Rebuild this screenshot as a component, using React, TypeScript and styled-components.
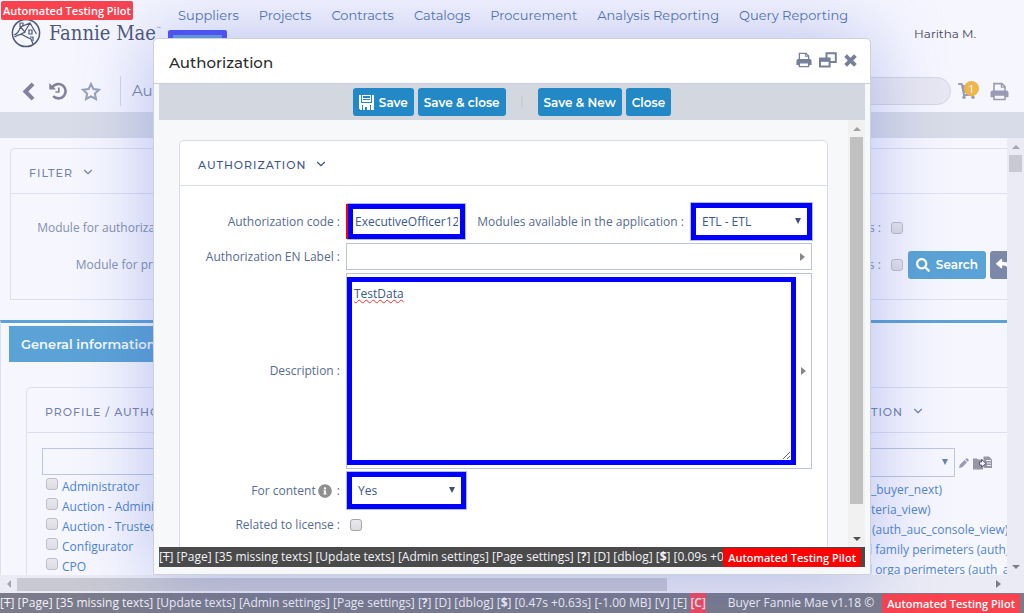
import React from 'react';
import styled, { createGlobalStyle, css } from 'styled-components';
import { FaShoppingCart, FaSearch, FaReply, FaInfoCircle } from 'react-icons/fa';
import { ChevronDown } from 'lucide-react';

const display = "Montserrat, Inter, 'Open Sans', sans-serif";
const body = "'Open Sans', 'Noto Sans', sans-serif";

const GlobalStyle = createGlobalStyle`
  *, *::before, *::after { box-sizing: border-box; }
  body { margin: 0; background: #f6f6ff; font-family: ${body}; font-size: 12px; line-height: 20px; color: #3d5a8a; overflow: hidden; }
  button, input, select, textarea { font: inherit; color: inherit; margin: 0; }
  a { text-decoration: none; color: inherit; }
  svg { display: block; flex: none; }
`;

const Page = styled.div`
  position: relative;
  height: 100vh;
  display: flex;
  flex-direction: column;
  overflow: hidden;
`;

const Header = styled.header`
  display: flex;
  align-items: flex-start;
  height: 70px;
  flex: none;
`;

const Brand = styled.a`
  display: flex;
  align-items: center;
  gap: 8px;
  width: 178px;
  padding: 18px 0 0 11px;
  font-family: 'Roboto Slab', 'DejaVu Serif Condensed', 'DejaVu Serif', 'Liberation Serif', serif;
  font-size: 20px;
  line-height: 30px;
  color: #4d5878;
  white-space: nowrap;
  sup { font-size: 6px; line-height: 6px; vertical-align: 9px; }
`;

const MainNav = styled.nav`
  display: flex;
  gap: 20px;
  flex: 1;
  padding-top: 5px;
`;

const NavLink = styled.a<{ $active?: boolean }>`
  position: relative;
  font-family: ${display};
  font-size: 13px;
  color: #5273b3;
  white-space: nowrap;
  ${(p) => p.$active && css`
    &::after {
      content: '';
      position: absolute;
      left: -10px;
      right: 12px;
      top: 25px;
      height: 14px;
      background: #6aa0d8;
      border: 5px solid #5252fa;
      border-radius: 2px;
    }
  `}
`;

const UserName = styled.span`
  padding: 24px 48px 0 0;
  font-family: ${display};
  font-size: 12px;
  color: #45455a;
`;

const TitleBar = styled.div`
  display: flex;
  align-items: center;
  justify-content: space-between;
  height: 42px;
  flex: none;
  padding: 0 15px 0 22px;
`;

const BarGroup = styled.div<{ $gap: number }>`
  display: flex;
  align-items: center;
  gap: ${(p) => p.$gap}px;
  color: #9a9ab4;
`;

const PlainButton = styled.button<{ $color?: string }>`
  display: flex;
  position: relative;
  padding: 0;
  border: 0;
  background: none;
  color: ${(p) => p.$color ?? '#9a9ab4'};
`;

const PageTitle = styled.h1`
  margin: 0 0 0 5px;
  padding-left: 11px;
  border-left: 1px solid #d4d7e6;
  font: 400 15px/30px ${display};
  color: #7b86a4;
`;

const SearchInput = styled.input`
  width: 180px;
  height: 28px;
  border: 1px solid #d5d5e4;
  border-radius: 14px;
  background: #e8e7f2;
`;

const Count = styled.span`
  position: absolute;
  right: -3px;
  top: -1px;
  width: 15px;
  height: 15px;
  border-radius: 50%;
  background: #efb54a;
  color: #fff;
  font-size: 11px;
  line-height: 15px;
  text-align: center;
`;

const Band = styled.div`
  height: 26px;
  flex: none;
  background: #d8dce8;
`;

const Viewport = styled.div`
  display: flex;
  flex: 1;
  min-height: 0;
`;

const Content = styled.main`
  flex: 1;
  min-width: 0;
  overflow: hidden;
`;

const BackPanel = styled.section<{ $nested?: boolean }>`
  margin: ${(p) => (p.$nested ? '25px 0 0 25px' : '10px 0 0 10px')};
  border: 1px solid #dcdff2;
  border-right: 0;
  border-radius: 5px 0 0 0;
`;

const BackPanelHead = styled.header`
  display: flex;
  align-items: center;
  justify-content: space-between;
  height: 45px;
  padding: 4px 82px 0 18px;
  border-bottom: 1px solid #dcdff2;
`;

const PanelTitle = styled.h2<{ $strong?: boolean }>`
  display: flex;
  align-items: center;
  gap: 8px;
  margin: 0;
  font: 500 11px/20px ${display};
  letter-spacing: 1px;
  color: ${(p) => (p.$strong ? '#3d5588' : '#7482ab')};
  white-space: nowrap;
  svg { margin-top: -2px; }
`;

const FilterRow = styled.div`
  display: flex;
  align-items: center;
  height: 37px;
  color: #8290b0;
`;

const FilterLabel = styled.label`
  width: 178px;
  text-align: right;
  white-space: nowrap;
`;

const FilterBody = styled.div`
  padding: 15px 0 16px;
`;

const Check = styled.input.attrs({ type: 'checkbox' })<{ $faded?: boolean }>`
  appearance: none;
  flex: none;
  width: 12px;
  height: 12px;
  border: 1px solid ${(p) => (p.$faded ? '#bcbccb' : '#a4a4a4')};
  border-radius: 3px;
  background: linear-gradient(#e8e8ee, #dcdce2);
`;

const FilterEnd = styled.div`
  display: flex;
  align-items: center;
  flex: 1;
  justify-content: flex-end;
  gap: 4px;
`;

const EndCheck = styled.label<{ $space: number }>`
  display: flex;
  align-items: center;
  gap: 10px;
  margin-right: ${(p) => p.$space}px;
`;

const ActionButton = styled.button<{ $kind: 'dialog' | 'page' | 'clipped' }>`
  display: flex;
  align-items: center;
  gap: ${(p) => (p.$kind === 'page' ? 6 : 5)}px;
  height: 28px;
  width: ${(p) => (p.$kind === 'clipped' ? '17px' : 'auto')};
  overflow: hidden;
  padding: 1px ${(p) => (p.$kind === 'page' ? 8 : 6)}px 0;
  border: 0;
  border-radius: ${(p) => (p.$kind === 'clipped' ? '3px 0 0 3px' : '3px')};
  background: ${(p) => ({ dialog: '#2388c6', page: '#5ba3d6', clipped: '#7d87a8' })[p.$kind]};
  color: #fff;
  font: 600 12px/20px ${display};
  white-space: nowrap;
`;

const Tabs = styled.div`
  margin-top: 20px;
  border-top: 3px solid #5ba3d6;
  border-left: 1px solid #dcdff2;
  padding-top: 3px;
`;

const Tab = styled.button`
  display: block;
  width: 166px;
  height: 36px;
  margin-left: 8px;
  padding: 0 12px;
  border: 0;
  background: #5ba3d6;
  color: #f4f8ff;
  text-align: left;
  font: 600 13px/20px ${display};
  white-space: nowrap;
`;

const Columns = styled.div`
  display: flex;
  justify-content: space-between;
  padding: 15px 0 0 15px;
`;

const ProfileList = styled.div`
  flex: 1;
`;

const ProfileInput = styled.input`
  display: block;
  width: 200px;
  height: 27px;
  margin-bottom: 2px;
  border: 1px solid #bcc6e0;
  background: transparent;
`;

const ProfileItem = styled.label`
  display: flex;
  gap: 4px;
  height: 20px;
  padding-left: 4px;
  color: #4a84d4;
  white-space: nowrap;
  input { margin-top: 1px; }
`;

const AuthList = styled.div`
  width: 143px;
  overflow: hidden;
  white-space: nowrap;
`;

const AuthTools = styled.div`
  display: flex;
  align-items: center;
  gap: 4px;
  margin-bottom: 3px;
`;

const AuthSelect = styled.select`
  display: block;
  appearance: none;
  width: 91px;
  height: 29px;
  border: 1px solid #bcc6e0;
  background: transparent;
`;

const SelectWrap = styled.span<{ $right: number; $color: string }>`
  position: relative;
  display: block;
  &::after {
    content: '';
    position: absolute;
    right: ${(p) => p.$right}px;
    top: 50%;
    margin-top: -4px;
    border: 3px solid transparent;
    border-top: 6px solid ${(p) => p.$color};
    border-bottom: 0;
    pointer-events: none;
  }
`;

const AuthLink = styled.a<{ $indent: number }>`
  display: block;
  height: 20px;
  padding-left: ${(p) => p.$indent}px;
  color: #5286cc;
`;

const Scroll = styled.div<{ $dir: 'v' | 'h'; $bg: string }>`
  display: flex;
  flex: none;
  flex-direction: ${(p) => (p.$dir === 'v' ? 'column' : 'row')};
  align-items: center;
  background: ${(p) => p.$bg};
  ${(p) => (p.$dir === 'v' ? 'width: 17px;' : 'height: 18px; padding-right: 17px;')}
`;

const Arrow = styled.span<{ $to: 'up' | 'down' | 'left' | 'right'; $color: string; $narrow?: boolean }>`
  display: flex;
  align-items: center;
  justify-content: center;
  flex: none;
  width: ${(p) => (p.$narrow ? 15 : 17)}px;
  height: 17px;
  &::before {
    content: '';
    border: 4px solid transparent;
    ${(p) => p.$to === 'up' && `border-top: 0; border-bottom-color: ${p.$color};`}
    ${(p) => p.$to === 'down' && `border-bottom: 0; border-top-color: ${p.$color};`}
    ${(p) => p.$to === 'left' && `border-left: 0; border-right-color: ${p.$color};`}
    ${(p) => p.$to === 'right' && `border-right: 0; border-left: 5px solid ${p.$color};`}
  }
`;

const Track = styled.span`
  display: block;
  flex: 1;
  align-self: stretch;
`;

const Thumb = styled.span<{ $dir: 'v' | 'h'; $size: string; $color: string }>`
  display: block;
  background: ${(p) => p.$color};
  ${(p) => (p.$dir === 'v'
    ? `width: 13px; height: ${p.$size}; margin: 0 2px;`
    : `height: 13px; width: ${p.$size}; margin: 2px 0;`)}
`;

const DebugBar = styled.footer<{ $bg: string }>`
  display: flex;
  align-items: center;
  flex: none;
  height: 20px;
  overflow: hidden;
  background: ${(p) => p.$bg};
  color: #f2f2f8;
  font-weight: 500;
  white-space: nowrap;
`;

const DebugText = styled.span`
  flex: 1;
  min-width: 0;
  overflow: hidden;
  mark { background: #ee4a5c; color: #f4e4f0; font-weight: 600; padding: 2px 0; }
`;

const Version = styled.span`
  flex: none;
  padding-right: 8px;
`;

const PilotTag = styled.strong<{ $color: string; $corner?: boolean }>`
  flex: none;
  height: 19px;
  padding: 0 5px;
  border-radius: 2px;
  background: ${(p) => p.$color};
  color: #fff;
  font-size: 11px;
  line-height: 19px;
  font-weight: 600;
  white-space: nowrap;
  ${(p) => p.$corner && css`
    position: absolute;
    left: 1px;
    top: 1px;
    padding: 0 2px;
  `}
`;

const TagSlot = styled.span`
  display: flex;
  flex: none;
  padding-right: 4px;
`;

const Dialog = styled.div`
  position: absolute;
  inset: 38px 153px 38px 153px;
  display: flex;
  flex-direction: column;
  border: 1px solid #cfd0d8;
  border-radius: 5px 5px 0 0;
  background: #f7f8fa;
  box-shadow: 0 0 75px rgba(60, 90, 200, 0.36);
`;

const DialogHead = styled.header`
  display: flex;
  align-items: center;
  justify-content: space-between;
  flex: none;
  height: 45px;
  padding: 0 13px 0 15px;
  border-bottom: 1px solid #c9cde4;
  border-radius: 5px 5px 0 0;
  background: #fff;
  h2 { margin: 0; padding-top: 4px; font: 500 15px/20px ${display}; color: #2c2c2e; }
`;

const DialogInner = styled.div`
  display: flex;
  flex-direction: column;
  flex: 1;
  min-height: 0;
  padding: 0 5px 7px;
`;

const Toolbar = styled.div`
  display: flex;
  align-items: center;
  justify-content: center;
  gap: 4px;
  flex: none;
  height: 36px;
  background: #d3d8e0;
`;

const Divider = styled.span`
  width: 2px;
  height: 12px;
  margin: 0 11px;
  background: #cbcfd2;
`;

const FormArea = styled.div`
  display: flex;
  flex: 1;
  min-height: 0;
`;

const FormScroll = styled.div`
  flex: 1;
  min-width: 0;
  overflow: hidden;
  padding: 20px 20px 0;
`;

const Card = styled.section`
  min-height: 460px;
  border: 1px solid #d9dbea;
  border-radius: 5px;
  background: #fff;
`;

const CardHead = styled.header`
  height: 45px;
  padding: 14px 18px 0;
  border-bottom: 1px solid #d9dbea;
`;

const Form = styled.form`
  display: grid;
  grid-template-columns: 160px 1fr;
  column-gap: 6px;
  row-gap: 3px;
  align-items: center;
  padding: 17px 15px 0 0;
`;

const Label = styled.label<{ $inline?: boolean }>`
  display: flex;
  align-items: center;
  justify-content: flex-end;
  gap: 2px;
  padding-left: ${(p) => (p.$inline ? 4 : 0)}px;
  color: #566c92;
  white-space: nowrap;
`;

const Line = styled.div<{ $indent?: number }>`
  display: flex;
  align-items: center;
  justify-content: space-between;
  min-height: 26px;
  padding-left: ${(p) => p.$indent ?? 0}px;
`;

const CodeInput = styled.input`
  width: 117px;
  height: 35px;
  margin-right: 1px;
  padding: 0 2px;
  border: 5px solid #0000ff;
  border-radius: 0;
  box-shadow: -2px 0 0 #ff0000, 0 0 0 1px #b4bfd4;
  background: #fff;
  color: #3a5888;
  font-weight: 500;
  outline: 0;
`;

const BlueSelect = styled.select<{ $width: number }>`
  display: block;
  appearance: none;
  width: ${(p) => p.$width}px;
  height: 37px;
  padding: 0 6px;
  border: 5px solid #0000ff;
  box-shadow: 0 0 0 1px #b4bfd4;
  border-radius: 0;
  background: #fff;
  color: #3a5888;
  font-weight: 500;
  outline: 0;
`;

const ArrowField = styled.div`
  display: flex;
  align-items: center;
  border: 1px solid #bcc5d8;
`;

const LabelInput = styled.input`
  flex: 1;
  min-width: 0;
  height: 25px;
  border: 0;
  background: transparent;
  outline: 0;
`;

const Description = styled.textarea`
  display: block;
  flex: 1;
  min-width: 0;
  height: 188px;
  margin: 3px 0;
  padding: 2px;
  border: 5px solid #0000ff;
  border-radius: 0;
  background: #fff;
  color: #3a5888;
  font-weight: 500;
  outline: 0;
  resize: vertical;
  text-decoration: underline wavy #f03030 1px;
`;

const HeadIcons = styled.div`
  display: flex;
  align-items: center;
  gap: 7px;
  padding-bottom: 2px;
`;

const PrinterIcon = ({ size, paper }: { size: number; paper: string }) => (
  <svg width={size} height={size} viewBox="0 0 18 18" fill="none" stroke="currentColor" strokeWidth="1.5">
    <path d="M3.8 9V1.5h7.4L14.2 4.4V9" />
    <path d="M10.8 1.5V4.8H14.2" strokeWidth="1.2" />
    <path d="M0.5 10Q0.5 8 2.5 8h13Q17.5 8 17.5 10V14.5H0.5Z" fill="currentColor" stroke="none" />
    <path d="M3.8 12.2h10.4v4.3H3.8Z" fill={paper} />
  </svg>
);

const BackIcon = () => (
  <svg width="13" height="19" viewBox="0 0 13 19" fill="none" stroke="currentColor" strokeWidth="4">
    <path d="M11 1.8L3.4 9.5L11 17.2" />
  </svg>
);

const HistoryIcon = () => (
  <svg width="18" height="18" viewBox="0 0 18 18" fill="none" stroke="currentColor" strokeWidth="2.6">
    <path d="M3.4 5.2A7.2 7.2 0 1 1 4.2 14.2" />
    <path d="M0.3 1V7.6H7Z" fill="currentColor" stroke="none" />
    <path d="M9.8 5.4V10H6.4" strokeWidth="1.7" />
  </svg>
);

const StarIcon = () => (
  <svg width="20" height="19" viewBox="0 0 20 19" fill="none" stroke="currentColor" strokeWidth="2">
    <path d="M10 2L12.4 7L18 7.7L13.9 11.5L15 17L10 14.3L5 17L6.1 11.5L2 7.7L7.6 7Z" />
  </svg>
);

const CloseIcon = () => (
  <svg width="13" height="13" viewBox="0 0 13 13" stroke="currentColor" strokeWidth="3.8">
    <path d="M1.6 1.6L11.4 11.4M11.4 1.6L1.6 11.4" />
  </svg>
);

const PencilIcon = () => (
  <svg width="10" height="10" viewBox="0 0 10 10" fill="currentColor">
    <path d="M0 10L0.8 6.8L5.6 2L8 4.4L3.2 9.2ZM6.2 1.4L7.2 0.4Q7.8 0 8.4 0.5L9.5 1.6Q10 2.2 9.6 2.8L8.6 3.8Z" />
  </svg>
);

const WindowsIcon = () => (
  <svg width="18" height="16" viewBox="0 0 18 16" fill="none" stroke="currentColor" strokeWidth="2">
    <path d="M7.5 6V1.2H16.8V10H11" />
    <path d="M1 6.5h9.6v8H1Z" fill="#fff" />
    <path d="M1 6.5h9.6v2.8H1Z" fill="currentColor" strokeWidth="1" />
  </svg>
);

const FloppyIcon = () => (
  <svg width="15" height="15" viewBox="0 0 15 15" fill="#fff" shapeRendering="crispEdges">
    <path d="M0 0h2v8h11V0h2v15h-3v-5H3v5H1l-1-1Z" />
    <path d="M3 0h9v1H3ZM3 3h9v1H3ZM3 5h9v2H3ZM3 1h1v5H3ZM11 1h1v5h-1Z" />
    <path d="M4 10h7v5H8v-3H6v3H4Z" />
  </svg>
);

const HouseLogo = () => (
  <svg width="30" height="30" viewBox="0 0 30 30" fill="none" stroke="currentColor" strokeWidth="1.5">
    <circle cx="15" cy="15" r="13.6" />
    <path d="M3 17Q7 16 9.500 9L19 5L25.500 16M9 9V5h3v3M19 5L13 15M3.500 19Q9 15 12 17T20 21L22 26M9.500 9L14 14L8 17" strokeWidth="1.2" />
    <path d="M18 12h3v4h-3ZM19 19h3v4" strokeWidth="1.2" />
  </svg>
);

const TransferIcon = () => (
  <svg width="20" height="14" viewBox="0 0 20 14" fill="#9696a6">
    <path d="M0 2.500h4l1 1h5V13.500H0Z" />
    <path d="M10.500 0.500h5.500l3 3v8.500h-8.500Z" />
    <path d="M13 4.500h5M14 7h4M14 9.500h4" stroke="#f0f0fa" />
    <path d="M6.500 6H8.500V3.500L13 7.500L8.500 11V9H6.500Z" fill="#f4f4ff" stroke="#5c5c70" />
  </svg>
);

const navItems = ['Suppliers', 'Projects', 'Contracts', 'Catalogs', 'Procurement', 'Analysis Reporting', 'Query Reporting'];
const profiles = ['Administrator', 'Auction - Administrator', 'Auction - Trusted', 'Configurator', 'CPO'];
const rights: [string, number][] = [
  ['_buyer_next)', 7],
  ['teria_view)', 7],
  ['(auth_auc_console_view)', 8],
  ['l family perimeters (auth_', 5],
  ['l orga perimeters (auth_a', 5],
];

const DebugLinks = ({ timing }: { timing: React.ReactNode }) => (
  <DebugText>
    [<del>T</del>] [Page] [35 missing texts] [Update texts] [Admin settings] [Page settings] [<b>?</b>] [D] [dblog] [<b>$</b>] {timing}
  </DebugText>
);

export default function App() {
  return (
    <Page>
      <GlobalStyle />
      <Header>
        <Brand href="#"><HouseLogo /><span>Fannie Mae<sup>™</sup></span></Brand>
        <MainNav>
          {navItems.map((item, i) => <NavLink key={item} href="#" $active={i === 0}>{item}</NavLink>)}
        </MainNav>
        <UserName>Haritha M.</UserName>
      </Header>
      <TitleBar>
        <BarGroup $gap={14}>
          <PlainButton aria-label="Back" $color="#857f9e"><BackIcon /></PlainButton>
          <PlainButton aria-label="History" $color="#857f9e"><HistoryIcon /></PlainButton>
          <PlainButton aria-label="Favourite" $color="#96a0b8"><StarIcon /></PlainButton>
          <PageTitle>Authorizations</PageTitle>
        </BarGroup>
        <BarGroup $gap={7}>
          <SearchInput aria-label="Search the site" />
          <PlainButton aria-label="Cart"><FaShoppingCart size={18} /><Count>1</Count></PlainButton>
          <span />
          <PlainButton aria-label="Print page"><PrinterIcon size={19} paper="#f6f6ff" /></PlainButton>
        </BarGroup>
      </TitleBar>
      <Band />
      <Viewport>
        <Content>
          <BackPanel>
            <BackPanelHead><PanelTitle>FILTER <ChevronDown size={14} /></PanelTitle></BackPanelHead>
            <FilterBody>
              <FilterRow>
                <FilterLabel htmlFor="f1">Module for authorizations :</FilterLabel>
                <FilterEnd><EndCheck $space={104}>s : <Check id="f1" $faded /></EndCheck></FilterEnd>
              </FilterRow>
              <FilterRow>
                <FilterLabel htmlFor="f2">Module for profiles :</FilterLabel>
                <FilterEnd>
                  <EndCheck $space={1}>s : <Check id="f2" $faded /></EndCheck>
                  <ActionButton $kind="page"><FaSearch size={14} /> Search</ActionButton>
                  <ActionButton $kind="clipped" aria-label="Reset"><FaReply size={14} /></ActionButton>
                </FilterEnd>
              </FilterRow>
            </FilterBody>
          </BackPanel>
          <Tabs>
            <Tab>General information</Tab>
            <BackPanel $nested>
              <BackPanelHead>
                <PanelTitle>PROFILE / AUTHORIZATION</PanelTitle>
                <PanelTitle>AUTHORIZATION <ChevronDown size={14} /></PanelTitle>
              </BackPanelHead>
              <Columns>
                <ProfileList>
                  <ProfileInput aria-label="Profile" />
                  {profiles.map((p) => <ProfileItem key={p}><Check $faded /><span>{p}</span></ProfileItem>)}
                </ProfileList>
                <AuthList>
                  <AuthTools>
                    <SelectWrap $right={7} $color="#6c80b0"><AuthSelect aria-label="Right" /></SelectWrap>
                    <PlainButton aria-label="Edit"><PencilIcon /></PlainButton>
                    <PlainButton aria-label="Transfer"><TransferIcon /></PlainButton>
                  </AuthTools>
                  {rights.map(([text, indent]) => <AuthLink key={text} href="#" $indent={indent}>{text}</AuthLink>)}
                </AuthList>
              </Columns>
            </BackPanel>
          </Tabs>
        </Content>
        <Scroll $dir="v" $bg="#ebebf5">
          <Arrow $to="up" $color="#a5a5b2" />
          <Thumb $dir="v" $size="17px" $color="#c9c9d4" />
          <Track />
          <Arrow $to="down" $color="#7c7c8c" />
        </Scroll>
      </Viewport>
      <Scroll $dir="h" $bg="#ebebf5">
        <Arrow $to="left" $color="#a5a5b2" />
        <Thumb $dir="h" $size="64.5%" $color="#c9c9d4" />
        <Track />
        <Arrow $to="right" $color="#7c7c8c" />
      </Scroll>
      <DebugBar $bg="#7b7b8b">
        <DebugLinks timing={<>[0.47s +0.63s] [-1.00 MB] [V] [E] <mark>[C]</mark></>} />
        <Version>Buyer Fannie Mae v1.18 ©</Version>
        <TagSlot><PilotTag $color="#f8434f">Automated Testing Pilot</PilotTag></TagSlot>
      </DebugBar>
      <PilotTag $color="#f8434f" $corner>Automated Testing Pilot</PilotTag>

      <Dialog role="dialog" aria-labelledby="dialog-title">
        <DialogHead>
          <h2 id="dialog-title">Authorization</h2>
          <HeadIcons>
            <PlainButton aria-label="Print" $color="#77809a"><PrinterIcon size={16} paper="#fff" /></PlainButton>
            <PlainButton aria-label="Restore" $color="#77809a"><WindowsIcon /></PlainButton>
            <PlainButton aria-label="Close dialog" $color="#77809a"><CloseIcon /></PlainButton>
          </HeadIcons>
        </DialogHead>
        <DialogInner>
          <Toolbar>
            <ActionButton $kind="dialog"><FloppyIcon /> Save</ActionButton>
            <ActionButton $kind="dialog">Save &amp; close</ActionButton>
            <Divider />
            <ActionButton $kind="dialog">Save &amp; New</ActionButton>
            <ActionButton $kind="dialog">Close</ActionButton>
          </Toolbar>
          <FormArea>
            <FormScroll>
              <Card>
                <CardHead><PanelTitle $strong>AUTHORIZATION <ChevronDown size={14} /></PanelTitle></CardHead>
                <Form>
                  <Label htmlFor="code">Authorization code :</Label>
                  <Line $indent={2}>
                    <CodeInput id="code" defaultValue="ExecutiveOfficer123" />
                    <Label $inline htmlFor="module">Modules available in the application :</Label>
                    <SelectWrap $right={11} $color="#3a5080">
                      <BlueSelect id="module" $width={121}><option>ETL - ETL</option></BlueSelect>
                    </SelectWrap>
                  </Line>
                  <Label htmlFor="label">Authorization EN Label :</Label>
                  <ArrowField><LabelInput id="label" /><Arrow $to="right" $color="#888888" /></ArrowField>
                  <Label htmlFor="description">Description :</Label>
                  <ArrowField>
                    <Description id="description" defaultValue="TestData" />
                    <Arrow $narrow $to="right" $color="#888888" />
                  </ArrowField>
                  <Label htmlFor="content">For content <FaInfoCircle size={14} color="#909090" /> <span>&nbsp;:</span></Label>
                  <Line $indent={1}>
                    <SelectWrap $right={11} $color="#3a5080">
                      <BlueSelect id="content" $width={119}><option>Yes</option></BlueSelect>
                    </SelectWrap>
                  </Line>
                  <Label htmlFor="license">Related to license :</Label>
                  <Line $indent={4}><Check id="license" /></Line>
                </Form>
              </Card>
            </FormScroll>
            <Scroll $dir="v" $bg="#f1f1f1">
              <Arrow $to="up" $color="#a0a0a0" />
              <Thumb $dir="v" $size="86%" $color="#c1c1c1" />
              <Track />
              <Arrow $to="down" $color="#505050" />
            </Scroll>
          </FormArea>
          <DebugBar $bg="#4a4a4a">
            <DebugLinks timing="[0.09s +0" />
            <TagSlot><PilotTag $color="#ff0000">Automated Testing Pilot</PilotTag></TagSlot>
          </DebugBar>
        </DialogInner>
      </Dialog>
    </Page>
  );
}
